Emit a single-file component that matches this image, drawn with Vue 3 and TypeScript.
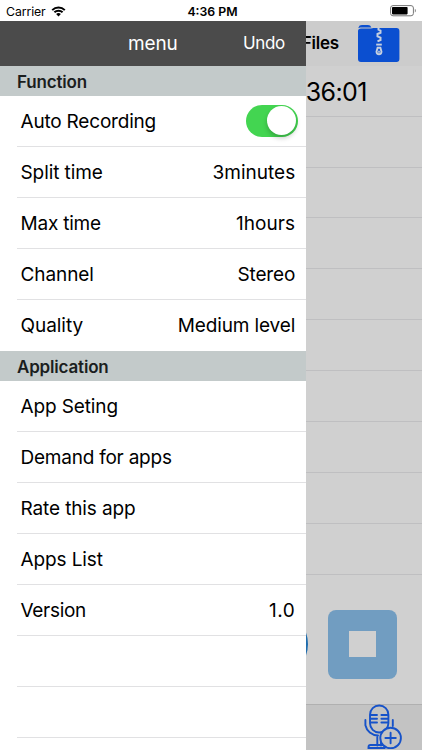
<script setup lang="ts">
interface Row {
  label: string
  value?: string
  toggle?: boolean
  spacing: number
  valueSpacing?: number
}

const functionRows: Row[] = [
  { label: 'Auto Recording', toggle: true, spacing: -0.2 },
  { label: 'Split time', value: '3minutes', spacing: -0.08, valueSpacing: 0 },
  { label: 'Max time', value: '1hours', spacing: -0.22, valueSpacing: 0.08 },
  { label: 'Channel', value: 'Stereo', spacing: -0.08, valueSpacing: -0.15 },
  { label: 'Quality', value: 'Medium level', spacing: -0.05, valueSpacing: -0.13 },
]

const applicationRows: Row[] = [
  { label: 'App Seting', spacing: -0.12 },
  { label: 'Demand for apps', spacing: -0.23 },
  { label: 'Rate this app', spacing: -0.12 },
  { label: 'Apps List', spacing: -0.12 },
  { label: 'Version', value: '1.0', spacing: -0.3, valueSpacing: 0.5 },
  { label: '', spacing: 0 },
  { label: '', spacing: 0 },
  { label: '', spacing: 0 },
]

const sections = [
  { title: 'Function', rows: functionRows },
  { title: 'Application', rows: applicationRows },
]
</script>

<template>
  <div class="screen">
    <header class="status">
      <div class="carrier">
        <span>Carrier</span>
        <svg class="wifi" viewBox="0 0 15 11" width="15" height="11">
          <path d="M1.2 4.1a9 9 0 0 1 12.6 0" />
          <path d="M3.4 6.3a5.9 5.9 0 0 1 8.2 0" />
          <path class="dot" d="M5.1 8.1a3.4 3.4 0 0 1 4.8 0L7.5 10.6z" />
        </svg>
      </div>
      <span class="clock">4:36 PM</span>
      <svg class="battery" viewBox="0 0 27 12" width="27" height="12">
        <rect class="shell" x="0.6" y="0.6" width="22.8" height="10.2" rx="2.4" />
        <rect x="2" y="2" width="15.6" height="7.4" rx="0.8" />
        <path class="cap" d="M24.8 3.8c1.5.5 1.5 3.3 0 3.8z" />
      </svg>
    </header>

    <div class="body">
      <aside class="menu">
        <div class="menu-bar">
          <span></span>
          <span class="menu-title">menu</span>
          <span class="undo">Undo</span>
        </div>
        <section v-for="section in sections" :key="section.title">
          <h2 class="section-title">{{ section.title }}</h2>
          <div v-for="(row, i) in section.rows" :key="i" class="row">
            <span class="label" :style="{ letterSpacing: row.spacing + 'px' }">{{ row.label }}</span>
            <span v-if="row.toggle" class="switch"><span class="knob"></span></span>
            <span v-else-if="row.value" class="value" :style="{ letterSpacing: row.valueSpacing + 'px' }">{{ row.value }}</span>
          </div>
        </section>
      </aside>

      <main class="recorder">
        <div class="files-bar">
          <span class="files">Files</span>
          <svg class="folder" viewBox="0 0 44 40" width="44" height="40">
            <path class="blue" d="M1.5 5.2V4.4Q2 2 5 2H11Q13.4 2 14.4 4.4H3z" />
            <path class="blue" d="M4 5.4H14Q15.4 5.2 16.4 5H39.5Q42.4 5 42.4 8V36Q42.4 39 39.5 39H4Q1 39 1 36V8Q1 5.4 4 5.4z" />
            <path class="zip" d="M21.5 4.4v2.2l2 1v2.2l-3 1.2v2.4l3 1.2v2.4l-3 1.4" />
            <path class="zip-line" d="M19.2 21.6h5.6" />
            <path class="zip-line" d="M20.6 24.8h2.8l1.1 4q-.4 2.4-2.5 2.4t-2.5-2.4z" />
            <path class="zip-line" d="M21.2 28.8h1.6" />
          </svg>
        </div>
        <div class="time">36:01</div>
        <div v-for="n in 9" :key="n" class="blank"></div>
        <div class="controls">
          <span class="record"></span>
          <span class="stop"><span></span></span>
        </div>
        <footer class="toolbar">
          <svg class="mic" viewBox="0 0 38 45" width="38" height="45">
            <rect x="6" y="1.5" width="18.4" height="27" rx="9.2" />
            <path d="M7 11h6M7 14.8h6M7 18.5h6M17.4 11h6M17.4 14.8h6M17.4 18.5h6" />
            <path d="M1.4 16v5.2A13.5 12.8 0 0 0 14 31.5M28.8 16v6M13.3 33v8.5M17 37v4.5M4.5 44v-1q0-2 2-2h14v3z" />
            <circle class="plus-disc" cx="26.6" cy="34" r="10.3" />
            <path d="M21.4 34h10.4M26.6 28.8v10.4" />
          </svg>
        </footer>
      </main>
    </div>
  </div>
</template>

<style>
body {
  margin: 0;
  overflow: hidden;
}
</style>

<style scoped>
.screen {
  width: 422px;
  height: 750px;
  overflow: hidden;
  background: #fff;
  color: #000;
  font-family: Inter, "Liberation Sans", sans-serif;
}
.status {
  height: 21px;
  display: grid;
  grid-template-columns: 1fr auto 1fr;
  align-items: center;
  padding: 1px 5px 0 6px;
  box-sizing: border-box;
  font-size: 12.3px;
}
.carrier {
  display: flex;
  align-items: center;
  gap: 5px;
  letter-spacing: -0.1px;
}
.wifi {
  fill: none;
  stroke: #000;
  stroke-width: 2;
}
.wifi .dot {
  fill: #000;
  stroke: none;
}
.clock {
  padding-left: 2px;
  font-weight: 600;
  letter-spacing: 0;
}
.battery {
  justify-self: end;
}
.battery .shell {
  fill: none;
  stroke: #777;
}
.battery .cap {
  fill: #888;
}
.body {
  display: flex;
  height: 729px;
}
.menu {
  width: 305.7px;
  flex: none;
  overflow: hidden;
  background: #fff;
}
.menu-bar {
  height: 44.7px;
  display: grid;
  grid-template-columns: 1fr auto 1fr;
  align-items: center;
  padding: 0 21px;
  background: #4b4b4b;
  color: #fff;
  font-size: 19px;
}
.menu-title {
  letter-spacing: -0.15px;
}
.undo {
  justify-self: end;
  font-size: 17px;
  letter-spacing: -0.4px;
}
.section-title {
  height: 30.3px;
  margin: 0;
  padding-left: 17px;
  background: #c3caca;
  color: #1b1e1e;
  font-size: 17px;
  line-height: 32px;
  font-weight: 600;
  letter-spacing: -0.18px;
}
.row {
  height: 50.97px;
  margin-left: 16.5px;
  padding: 0 10.5px 0 4px;
  box-sizing: border-box;
  display: flex;
  align-items: center;
  justify-content: space-between;
  border-bottom: 1px solid #e1e1e3;
  font-size: 19px;
  white-space: nowrap;
}
.row:last-child {
  border-bottom-color: transparent;
}
.label {
  padding-top: 1.4px;
}
.value {
  padding-top: 2px;
}
.switch {
  width: 52px;
  height: 32px;
  margin-right: -2.5px;
  padding: 1.5px;
  box-sizing: border-box;
  border-radius: 16px;
  background: #43d551;
  display: flex;
  justify-content: flex-end;
}
.knob {
  width: 29px;
  height: 29px;
  border-radius: 50%;
  background: #fff;
  box-shadow: 0 3px 5px rgba(0, 0, 0, 0.22);
}
.recorder {
  flex: 1;
  min-width: 0;
  overflow: hidden;
  display: flex;
  flex-direction: column;
  background: #d0d0d0;
}
.files-bar {
  height: 44.7px;
  flex: none;
  display: flex;
  align-items: center;
  justify-content: space-between;
  margin-left: -4px;
  padding-right: 21px;
  background: #cccccc;
}
.files {
  font-size: 17px;
  font-weight: 600;
  letter-spacing: -0.2px;
}
.time {
  height: 51px;
  flex: none;
  box-sizing: border-box;
  border-bottom: 1px solid #bfbfc1;
  font-size: 25px;
  letter-spacing: -0.6px;
  line-height: 52px;
}
.blank {
  height: 50.9px;
  flex: none;
  box-sizing: border-box;
  border-bottom: 1px solid #bfbfc1;
}
.controls {
  height: 129px;
  flex: none;
  display: flex;
  align-items: center;
  justify-content: space-between;
  padding: 10px 25px 0 0;
  box-sizing: border-box;
}
.record {
  width: 68px;
  height: 68px;
  margin-left: -65.5px;
  flex: none;
  border-radius: 50%;
  background: #1e6cad;
}
.stop {
  width: 69px;
  height: 69px;
  border-radius: 8px;
  background: #719dc1;
  display: grid;
  place-items: center;
}
.stop span {
  width: 27px;
  height: 26px;
  background: #d0d0d0;
}
.toolbar {
  flex: 1;
  border-top: 1px solid #b0b0b0;
  background: #c3c3c3;
  display: flex;
  justify-content: flex-end;
  padding-right: 20px;
}
.mic {
  margin-top: -1px;
  fill: none;
  stroke: #1652c9;
  stroke-width: 1.9;
  stroke-linecap: round;
}
.mic .plus-disc {
  fill: #c3c3c3;
}
.folder .blue {
  fill: #0b4fd0;
}
.folder .zip {
  fill: none;
  stroke: #c6d0df;
  stroke-width: 2;
}
.folder .zip-line {
  fill: none;
  stroke: #c6d0df;
  stroke-width: 1.9;
}
</style>
